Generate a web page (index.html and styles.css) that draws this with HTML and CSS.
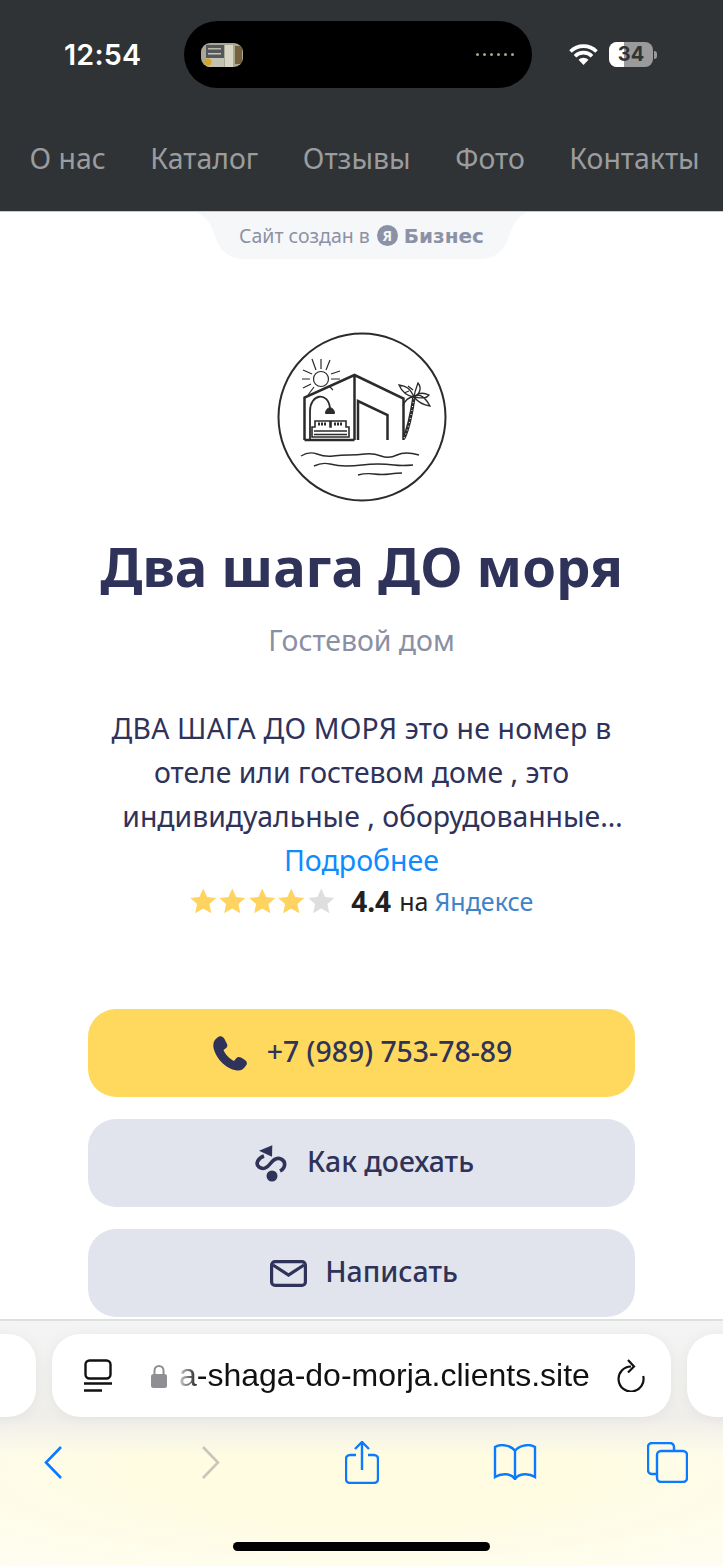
FILE: index.html
```html
<!DOCTYPE html>
<html lang="en">
<head>
    <meta charset="UTF-8">
    <meta name="viewport" content="width=device-width, initial-scale=1">
    <title>Два шага ДО моря</title>
    <link rel="stylesheet" href="styles.css">
</head>
<body>
    <div class="page">
        <header class="top">
            <div class="status">
                <span class="time">12:54</span>
                <div class="island">
                    <svg class="thumb" viewBox="0 0 42 24">
                        <rect width="42" height="24" fill="#a9a895"/>
                        <rect x="5" y="2" width="18" height="13" fill="#55575a"/>
                        <rect x="7" y="5" width="13" height="1.500" fill="#b9b9b0"/>
                        <rect x="7" y="10" width="13" height="1.500" fill="#c6c5bc"/>
                        <rect x="5" y="15" width="18" height="9" fill="#c3c2b3"/>
                        <rect x="24" y="2" width="8" height="22" fill="#d9d5c4"/>
                        <rect x="34" y="3" width="7" height="18" fill="#77603c"/>
                        <circle cx="7" cy="19" r="3.500" fill="#d8a521"/>
                    </svg>
                    <span class="dots"><i></i><i></i><i></i><i></i><i></i><i></i></span>
                </div>
                <svg class="wifi" viewBox="0 0 29 21">
                    <path d="M1.500 7.500a18.500 18.500 0 0 1 26 0M6 12.200a12 12 0 0 1 17 0" fill="none" stroke="#fff" stroke-width="3.600"/>
                    <path d="M14.500 21l-5-5.200a7 7 0 0 1 10 0z" fill="#fff"/>
                </svg>
                <div class="battery"><span class="level"></span><span class="charge">34</span></div>
                <span class="nub"></span>
            </div>
            <nav class="nav">
                <a>О нас</a>
                <a>Каталог</a>
                <a>Отзывы</a>
                <a>Фото</a>
                <a>Контакты</a>
            </nav>
        </header>

        <div class="badge">
            <svg class="badge-bg" viewBox="0 0 340 48">
                <path d="M0 0C12 4 16 14 20 25C25 40 34 48 50 48H290C306 48 315 40 320 25C324 14 328 4 340 0z" fill="#f6f7f9"/>
            </svg>
            <span class="badge-text">Сайт создан в</span>
            <span class="ya">Я</span>
            <span class="biz">Бизнес</span>
        </div>

        <main class="hero">
            <svg class="logo" viewBox="277 332 170 170" fill="none" stroke="#2b2b2b">
                <circle cx="362" cy="417" r="83.500" stroke-width="2"/>
                <!-- sun -->
                <circle cx="321" cy="379" r="7.500" stroke-width="1.200"/>
                <path d="M321 369V359M316 370L312 359M326 370L330 360M312 374L303 370M331 374L340 371M310 379H302M331 379L340 379M311 384L303 388M314 387L308 395M329 386L333 390" stroke-width="1.200"/>
                <!-- house -->
                <path d="M304.500 440V397.500L354.500 375L403.500 398.500V440M354.500 375V440M304.500 440H354.500" stroke-width="2.500"/>
                <path d="M358 440V401L387.500 415V440" stroke-width="2.500"/>
                <!-- lamp -->
                <path d="M310 440V411C310 394 328 391 330 408" stroke-width="1.800"/>
                <path d="M325.500 413.500C325.500 406 334.500 406 334.500 413.500z" fill="#2b2b2b" stroke-width="1"/>
                <!-- sofa -->
                <path d="M312 437V427H315V421H330V427H331V421H346V427H349V437zM314 431H347M314 434.500H347" stroke-width="1.600"/>
                <path d="M318 424h9M334 424h9" stroke-width="3" stroke-dasharray="2 1"/>
                <!-- palm -->
                <path d="M404 438C410 425 412 410 414 397" stroke-width="3.500"/>
                <path d="M404 438C410 425 412 410 414 397" stroke="#fff" stroke-width="1" stroke-dasharray="1 3"/>
                <path d="M414 397C410 388 406 386 399 385C402 392 407 396 414 397zM414 397C415 390 417 386 418 383C422 388 420 394 414 397zM414 397C420 393 425 397 430 406C423 405 418 402 414 397zM414 397C422 398 426 399 429 395C423 392 418 393 414 397zM414 397C409 397 405 400 403 406M409 391L404 393M413 390L408 386" stroke-width="1.300"/>
                <!-- waves -->
                <path d="M301 456Q309 451 317 454T333 456T349 455T365 454T381 456T397 455T419 455" stroke-width="1.400"/>
                <path d="M314 466Q322 462 330 464T346 466T362 465T378 464T394 465T413 465" stroke-width="1.400"/>
                <path d="M358 475Q366 473 374 474T390 474T402 473" stroke-width="1.400"/>
            </svg>
            <h1 class="title">Два шага ДО моря</h1>
            <p class="subtitle">Гостевой дом</p>
            <p class="about">ДВА ШАГА ДО МОРЯ это не номер в<br>отеле или гостевом доме , это<br><span class="about-last">индивидуальные , оборудованные…</span></p>
            <a class="more">Подробнее</a>
            <div class="rating">
                <div class="stars">
                    <svg viewBox="0 0 24 24"><path d="M12 .5l3.500 7.600 8.300.9-6.200 5.600 1.700 8.200L12 18.600l-7.300 4.200 1.700-8.200L.2 9l8.300-.9z"/></svg>
                    <svg viewBox="0 0 24 24"><path d="M12 .5l3.500 7.600 8.300.9-6.200 5.600 1.700 8.200L12 18.600l-7.300 4.200 1.700-8.200L.2 9l8.300-.9z"/></svg>
                    <svg viewBox="0 0 24 24"><path d="M12 .5l3.500 7.600 8.300.9-6.200 5.600 1.700 8.200L12 18.600l-7.300 4.200 1.700-8.200L.2 9l8.300-.9z"/></svg>
                    <svg viewBox="0 0 24 24"><path d="M12 .5l3.500 7.600 8.300.9-6.200 5.600 1.700 8.200L12 18.600l-7.300 4.200 1.700-8.200L.2 9l8.300-.9z"/></svg>
                    <svg class="off" viewBox="0 0 24 24"><path d="M12 .5l3.500 7.600 8.300.9-6.200 5.600 1.700 8.200L12 18.600l-7.300 4.200 1.700-8.200L.2 9l8.300-.9z"/></svg>
                </div>
                <b class="score">4.4</b>
                <span class="on">на</span>
                <a class="yandex">Яндексе</a>
            </div>
            <div class="actions">
                <button class="btn btn-call">
                    <svg class="ic-phone" viewBox="0 0 34 35"><path d="M6 .5C8-.5 10.500 1 11.500 3L14 8C14.800 10 14 11.500 12.500 12.500L10.500 14C12 18 16 22.500 21 25L23 22.500C24 21 26 20.500 28 21.500L32 24C34 25.500 34.500 27.500 33 29.500C31 33 28 35 24 34.500C12 33 1 20 .3 10C0 6 2 2.500 6 .5z" fill="#2f3259"/></svg>
                    +7 (989) 753-78-89
                </button>
                <button class="btn btn-route">
                    <svg class="ic-route" viewBox="0 0 32 37"><path d="M17.300.3L17 11.700 4 5.700z" fill="#2f3259"/><path d="M9 11C3 13 0 19 4 22C8 25 12 23 15 19C18 15 22 12 26 14C31 16 31 23 25 26" fill="none" stroke="#2f3259" stroke-width="3.600"/><circle cx="17" cy="31" r="5.500" fill="#2f3259"/></svg>
                    Как доехать
                </button>
                <button class="btn btn-mail">
                    <svg class="ic-mail" viewBox="0 0 37 27" fill="none" stroke="#2f3259" stroke-width="3.200"><rect x="1.600" y="1.600" width="33.800" height="23.800" rx="3.500"/><path d="M3 5L18.500 15 34 5"/></svg>
                    Написать
                </button>
            </div>
        </main>

        <!-- safari bar sits over the page -->
        <div class="safari">
            <div class="tabs">
                <span class="side side-left"></span>
                <div class="address">
                    <svg class="ic-reader" viewBox="0 0 28 33" fill="none" stroke="#111" stroke-width="2.400"><rect x="1.500" y="1.500" width="25" height="18" rx="4"/><path d="M0 24.500H28M0 31.500H18"/></svg>
                    <svg class="ic-lock" viewBox="0 0 16 24"><path d="M3.500 11V6.500a4.500 4.500 0 0 1 9 0V11" fill="none" stroke="#8e8e93" stroke-width="2"/><rect y="10" width="16" height="14" rx="2.500" fill="#8e8e93"/></svg>
                    <span class="url">a-shaga-do-morja.clients.site</span>
                    <svg class="ic-reload" viewBox="0 0 28 33" fill="none" stroke="#111" stroke-width="2.200"><path d="M14 7.500A12.500 12.500 0 1 0 26.200 17M11 1l6 6.500-6 6"/></svg>
                </div>
                <span class="side side-right"></span>
            </div>
            <div class="toolbar">
                <svg class="tool tool-back" viewBox="0 0 18 33" fill="none" stroke="#0a7aff" stroke-width="2.600"><path d="M17 1L2 16.500 17 32"/></svg>
                <svg class="tool tool-next" viewBox="0 0 18 33" fill="none" stroke="#c8c6bd" stroke-width="2.600"><path d="M1 1L16 16.500 1 32"/></svg>
                <svg class="tool tool-share" viewBox="0 0 34 43" fill="none" stroke="#0a7aff" stroke-width="2.400"><path d="M11 14H5a4 4 0 0 0-4 4v20a4 4 0 0 0 4 4h24a4 4 0 0 0 4-4V18a4 4 0 0 0-4-4h-6M17 29V2M10 8l7-7 7 7"/></svg>
                <svg class="tool tool-book" viewBox="0 0 44 36" fill="none" stroke="#0a7aff" stroke-width="2.400"><path d="M22 7C19 2 8-1 2 3V33C8 29 18 29 22 35C26 29 36 29 42 33V3C36-1 25 2 22 7zM22 7V35"/></svg>
                <svg class="tool tool-pages" viewBox="0 0 41 41" fill="none" stroke="#0a7aff" stroke-width="2.400"><path d="M27 9V5a4 4 0 0 0-4-4H5a4 4 0 0 0-4 4v23a4 4 0 0 0 4 4h4"/><rect x="10" y="9" width="30" height="31" rx="4"/></svg>
            </div>
            <div class="home-bar"></div>
        </div>
    </div>
</body>
</html>
```

FILE: styles.css
```css
* {
    box-sizing: border-box;
}
body {
    margin: 0;
    font-family: "Noto Sans", Arial, sans-serif;
    background-color: #fff;
}
.page {
    position: relative;
    width: 723px;
    height: 1566px;
    overflow: hidden;
    background: #fff;
}

/* header */
.top {
    height: 212px;
    background-color: #303336;
    border-bottom: 1px solid #c9cacb;
}
.status {
    display: flex;
    align-items: center;
    height: 108px;
    padding: 21px 0 20px 64px;
}
.time {
    width: 120px;
    color: #fff;
    font-family: Inter, Arial, sans-serif;
    font-size: 28.700px;
    font-weight: 600;
    letter-spacing: 0.2px;
}
.island {
    display: flex;
    align-items: center;
    justify-content: space-between;
    width: 348px;
    height: 67px;
    padding: 0 18px 0 17px;
    background: #000;
    border-radius: 34px;
}
.thumb {
    width: 42px;
    height: 24px;
    border-radius: 9px;
}
.dots {
    display: flex;
    gap: 4px;
}
.dots i {
    width: 3px;
    height: 3px;
    border-radius: 50%;
    background: #a8a48a;
}
.wifi {
    width: 29px;
    height: 21px;
    margin-left: 37px;
}
.battery {
    position: relative;
    width: 44px;
    height: 25px;
    margin-left: 11px;
    background: #9a9a9a;
    border-radius: 8px;
    overflow: hidden;
}
.level {
    display: block;
    width: 15px;
    height: 25px;
    background: #fff;
}
.charge {
    position: absolute;
    top: 0;
    left: 0;
    width: 100%;
    color: #303336;
    font-family: Inter, Arial, sans-serif;
    font-size: 20px;
    font-weight: 700;
    line-height: 25px;
    text-align: center;
}
.nub {
    width: 3px;
    height: 8px;
    margin-left: 1px;
    background: #9a9a9a;
    border-radius: 0 3px 3px 0;
}
.nav {
    display: flex;
    gap: 44.600px;
    padding: 29px 0 0 29.500px;
    color: #9a9c9e;
    font-size: 28.400px;
    line-height: 42px;
    white-space: nowrap;
}

/* "Сайт создан в" tab */
.badge {
    position: relative;
    display: flex;
    align-items: center;
    justify-content: center;
    width: 340px;
    height: 47px;
    margin: 0 auto;
    color: #8c92a5;
}
.badge-bg {
    position: absolute;
    top: 0;
    left: 0;
    width: 340px;
    height: 47px;
}
.badge-text {
    position: relative;
    font-size: 19.500px;
}
.ya {
    position: relative;
    width: 21px;
    height: 21px;
    margin: 0 6px 0 7px;
    background: #8c92a5;
    border-radius: 50%;
    color: #f6f7f9;
    font-size: 14px;
    font-weight: 700;
    line-height: 21px;
    text-align: center;
}
.biz {
    position: relative;
    font-family: "DejaVu Sans", Arial, sans-serif;
    font-size: 20px;
    font-weight: 700;
}

/* main block */
.hero {
    display: flex;
    flex-direction: column;
    align-items: center;
    padding-top: 73px;
    color: #2f3259;
}
.logo {
    width: 170px;
    height: 170px;
}
.title {
    margin: 24px 0 0;
    font-size: 54.400px;
    font-weight: 700;
    line-height: 80px;
    white-space: nowrap;
}
.subtitle {
    margin: 12px 0 0;
    color: #8a90a4;
    font-size: 28.400px;
    line-height: 44px;
}
.about {
    margin: 44px 0 0;
    font-size: 28.400px;
    line-height: 44px;
    text-align: center;
    white-space: nowrap;
}
.about::first-line {
    letter-spacing: 0.2px;
}
.about-last {
    padding-left: 22px;
}
.more {
    color: #0f8bff;
    font-size: 28.500px;
    line-height: 44px;
}
.rating {
    display: flex;
    align-items: center;
    height: 36px;
    margin-top: 1px;
    font-size: 25px;
    color: #222;
}
.stars {
    display: flex;
    gap: 3px;
    margin-right: 17px;
}
.stars svg {
    width: 26.500px;
    height: 26.500px;
    fill: #ffd35f;
}
.stars .off {
    fill: #dedede;
}
.score {
    margin-right: 8px;
    font-size: 28px;
}
.on {
    margin-right: 6px;
}
.yandex {
    color: #3f83c9;
}
.actions {
    display: flex;
    flex-direction: column;
    gap: 22px;
    width: 547px;
    margin-top: 90px;
}
.btn {
    display: flex;
    align-items: center;
    justify-content: center;
    height: 88px;
    padding: 0 0 4px 2px;
    border: none;
    border-radius: 28px;
    background-color: #e1e4ec;
    color: #2f3259;
    font-family: "Noto Sans", Arial, sans-serif;
    font-size: 28.400px;
    font-weight: 500;
}
.btn-call {
    background-color: #ffd95e;
}
.btn-route {
    padding-left: 6px;
}
.btn-mail {
    padding-left: 5px;
}
.btn svg {
    margin-top: 4px;
}
.ic-phone {
    width: 34px;
    height: 35px;
    margin-right: 20px;
}
.ic-route {
    width: 32px;
    height: 37px;
    margin-right: 20px;
}
.ic-mail {
    width: 37px;
    height: 27px;
    margin-right: 18px;
}

/* safari chrome */
.safari {
    position: absolute;
    top: 1319px;
    left: 0;
    width: 723px;
    height: 247px;
    border-top: 2px solid #dfdfdf;
    background:
        linear-gradient(#f3f4f4 0, #efeeea 97px, rgba(240, 239, 230, 0) 135px),
        radial-gradient(ellipse 75% 50% at 50% 62%, #fffce2 40%, #fefdf1 100%);
}
.tabs {
    display: flex;
    gap: 16px;
    margin: 13px 0 0 -40px;
    width: 803px;
}
.side {
    width: 76px;
    height: 83px;
    background: #fff;
    border-radius: 0 28px 28px 0;
    box-shadow: 0 2px 14px rgba(0, 0, 0, 0.05);
}
.side-right {
    border-radius: 28px 0 0 28px;
}
.address {
    position: relative;
    display: flex;
    align-items: center;
    width: 619px;
    height: 83px;
    padding-left: 32px;
    background: #fff;
    border-radius: 28px;
    box-shadow: 0 2px 14px rgba(0, 0, 0, 0.05);
}
.ic-reader {
    width: 28px;
    height: 33px;
}
.ic-lock {
    width: 16px;
    height: 24px;
    margin-left: 39px;
}
.url {
    width: 412px;
    margin-left: 12px;
    color: #111;
    font-family: "Liberation Sans", Arial, sans-serif;
    font-size: 32px;
    white-space: nowrap;
    -webkit-mask-image: linear-gradient(90deg, rgba(0, 0, 0, 0.2), #000 20px);
    mask-image: linear-gradient(90deg, rgba(0, 0, 0, 0.2), #000 20px);
}
.ic-reload {
    width: 28px;
    height: 33px;
    margin-left: 26px;
}
.toolbar {
    display: flex;
    align-items: center;
    height: 44px;
    margin-top: 23px;
    padding-left: 44px;
}
.tool {
    flex: none;
}
.tool-back {
    width: 18px;
    height: 33px;
}
.tool-next {
    width: 18px;
    height: 33px;
    margin-left: 140px;
}
.tool-share {
    width: 34px;
    height: 43px;
    margin-left: 125px;
}
.tool-book {
    width: 44px;
    height: 36px;
    margin-left: 114px;
}
.tool-pages {
    width: 41px;
    height: 41px;
    margin-left: 110px;
}
.home-bar {
    width: 257px;
    height: 9px;
    margin: 58px 0 0 233px;
    background: #000;
    border-radius: 5px;
}
```
